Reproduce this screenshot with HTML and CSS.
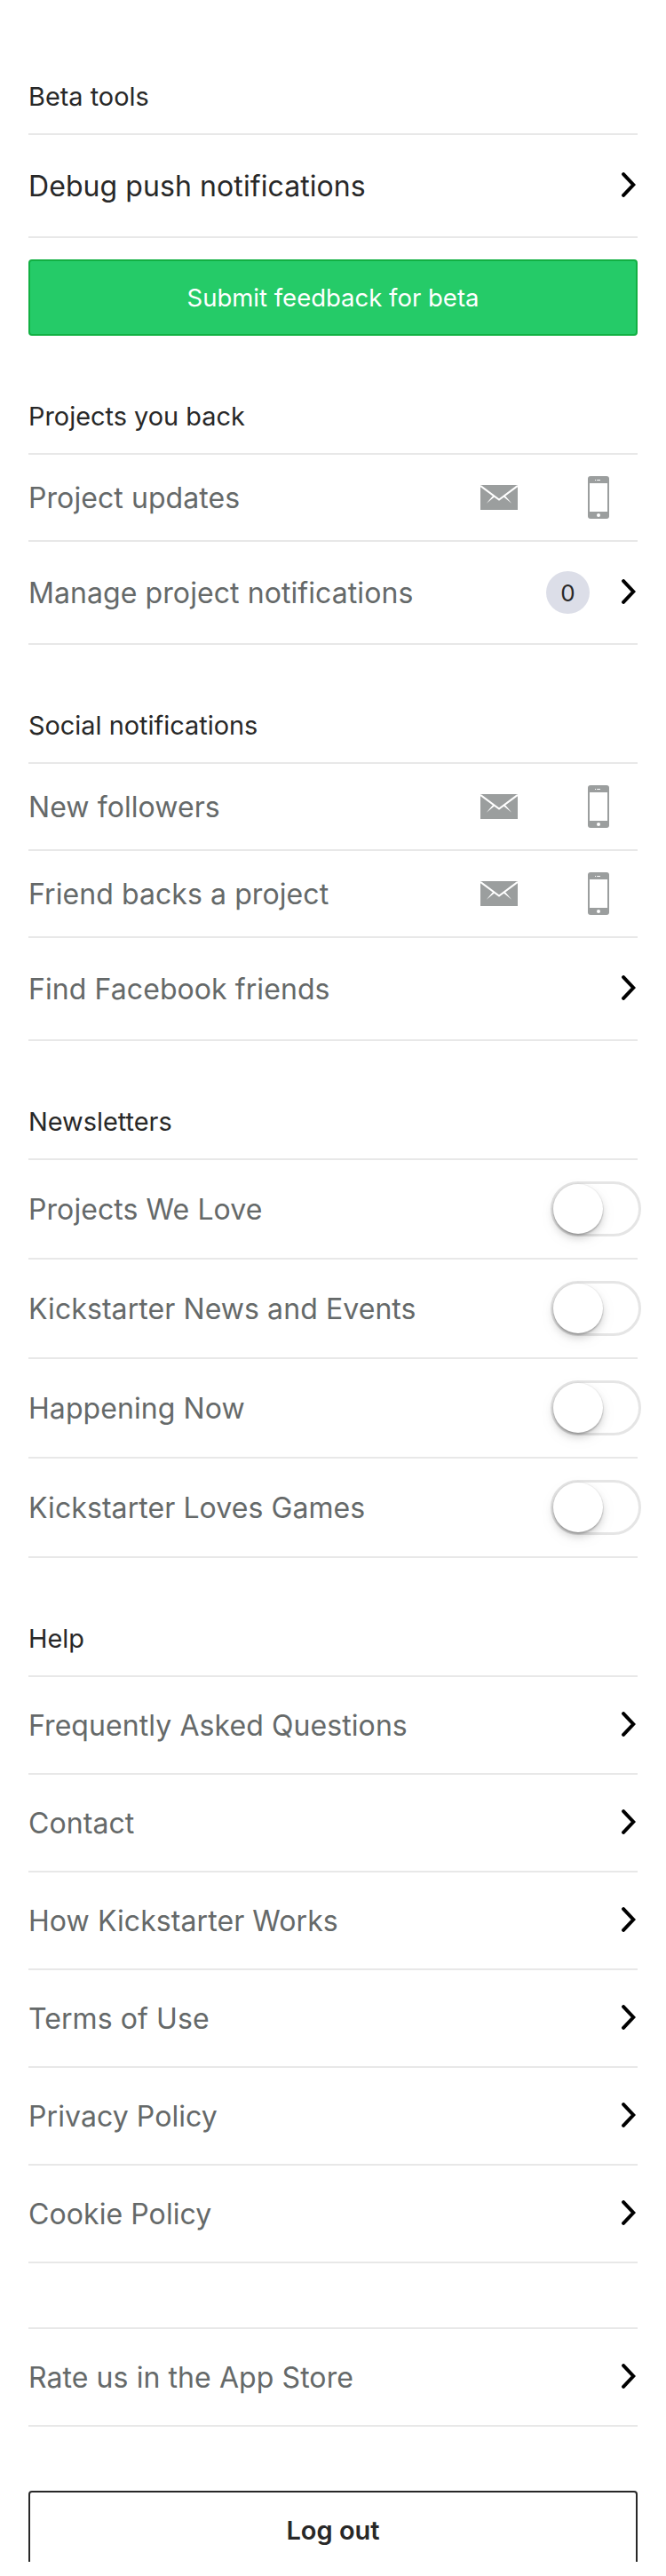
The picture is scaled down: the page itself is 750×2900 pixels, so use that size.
FILE: index.html
```html
<!DOCTYPE html>
<html lang="en">
<head>
<meta charset="utf-8">
<title>Settings</title>
<link rel="stylesheet" href="styles.css">
</head>
<body>
<svg class="sprite" aria-hidden="true">
  <symbol id="chevron" viewBox="0 0 16 28">
    <path d="M2.1 2.1 13.3 14 2.1 25.9" fill="none" stroke="#000" stroke-width="4" stroke-linecap="round"/>
  </symbol>
  <symbol id="mail" viewBox="0 0 42 28">
    <path d="M0 0h42v28H0z" fill="#9b9e9e"/>
    <path d="M0 .9 21 16.5 42 .9" fill="none" stroke="#fff" stroke-width="2"/>
    <path d="M14.6 11.6 6.8 20.8 16.4 13zM27.4 11.6l7.8 9.2L25.6 13z" fill="#fff"/>
  </symbol>
  <symbol id="phone" viewBox="0 0 24 48">
    <rect width="24" height="48" rx="3" fill="#9b9e9e"/>
    <path d="M2 8h20v32H2z" fill="#fff"/>
    <circle cx="12" cy="44" r="2" fill="#fff"/>
    <path d="M8 4.5h1M10.2 4.5h3.8" stroke="#fff" stroke-width="1"/>
  </symbol>
</svg>
<main class="settings">
  <section class="section">
    <h2 class="heading">Beta tools</h2>
    <a class="row row-tall row-dark"><span class="label">Debug push notifications</span><svg class="chevron"><use href="#chevron"/></svg></a>
    <button class="button button-primary">Submit feedback for beta</button>
  </section>

  <section class="section">
    <h2 class="heading">Projects you back</h2>
    <div class="row row-channels"><span class="label">Project updates</span><svg class="mail"><use href="#mail"/></svg><svg class="phone"><use href="#phone"/></svg></div>
    <a class="row row-tall"><span class="label">Manage project notifications</span><span class="badge">0</span><svg class="chevron"><use href="#chevron"/></svg></a>
  </section>

  <section class="section">
    <h2 class="heading">Social notifications</h2>
    <div class="row row-channels"><span class="label">New followers</span><svg class="mail"><use href="#mail"/></svg><svg class="phone"><use href="#phone"/></svg></div>
    <div class="row row-channels"><span class="label">Friend backs a project</span><svg class="mail"><use href="#mail"/></svg><svg class="phone"><use href="#phone"/></svg></div>
    <a class="row row-tall"><span class="label">Find Facebook friends</span><svg class="chevron"><use href="#chevron"/></svg></a>
  </section>

  <section class="section">
    <h2 class="heading">Newsletters</h2>
    <div class="row row-switch"><span class="label">Projects We Love</span><span class="switch"><span class="thumb"></span></span></div>
    <div class="row row-switch"><span class="label">Kickstarter News and Events</span><span class="switch"><span class="thumb"></span></span></div>
    <div class="row row-switch"><span class="label">Happening Now</span><span class="switch"><span class="thumb"></span></span></div>
    <div class="row row-switch"><span class="label">Kickstarter Loves Games</span><span class="switch"><span class="thumb"></span></span></div>
  </section>

  <section class="section">
    <h2 class="heading">Help</h2>
    <a class="row"><span class="label">Frequently Asked Questions</span><svg class="chevron"><use href="#chevron"/></svg></a>
    <a class="row"><span class="label">Contact</span><svg class="chevron"><use href="#chevron"/></svg></a>
    <a class="row"><span class="label">How Kickstarter Works</span><svg class="chevron"><use href="#chevron"/></svg></a>
    <a class="row"><span class="label">Terms of Use</span><svg class="chevron"><use href="#chevron"/></svg></a>
    <a class="row"><span class="label">Privacy Policy</span><svg class="chevron"><use href="#chevron"/></svg></a>
    <a class="row"><span class="label">Cookie Policy</span><svg class="chevron"><use href="#chevron"/></svg></a>
  </section>

  <section class="section section-rate">
    <a class="row"><span class="label">Rate us in the App Store</span><svg class="chevron"><use href="#chevron"/></svg></a>
  </section>

  <button class="button button-outline">Log out</button>
</main>
</body>
</html>
```
FILE: styles.css
```css
* { box-sizing: border-box; }

body {
  margin: 0;
  background: #fff;
  color: #282828;
  font-family: Inter, "Liberation Sans", sans-serif;
}

.sprite { position: absolute; width: 0; height: 0; }

.settings {
  height: 2884px;
  overflow: hidden;
  padding: 68px 32px 0;
}

.section { margin-bottom: 50px; }

.heading {
  display: flex;
  align-items: center;
  height: 84px;
  margin: 0;
  padding-bottom: 1px;
  border-bottom: 2px solid #e8e8e8;
  font-size: 28.9px;
  font-weight: 400;
}

.row {
  display: flex;
  align-items: center;
  height: 110px;
  border-bottom: 2px solid #e8e8e8;
  color: #656969;
  font-size: 32px;
  letter-spacing: 0.08px;
}

.row-tall { height: 116px; }
.row-dark { color: #282828; }
.row-channels { height: 98px; padding-right: 32px; }
.row-switch { height: 112px; }

.label { flex: 1; white-space: nowrap; }

.chevron {
  width: 16px;
  height: 28px;
  margin: 0 2px 2px 0;
}

.mail { width: 42px; height: 28px; margin-right: 79px; }
.phone { width: 24px; height: 48px; }

.badge {
  display: flex;
  align-items: center;
  justify-content: center;
  width: 49px;
  height: 48px;
  margin-right: 36px;
  border-radius: 50%;
  background: #dcdee8;
  color: #282828;
  font-size: 26px;
}

.switch {
  width: 102px;
  height: 62px;
  margin-right: -4px;
  border: 3px solid #e5e5e5;
  border-radius: 31px;
}

.thumb {
  display: block;
  width: 56px;
  height: 56px;
  border-radius: 50%;
  background: #fff;
  box-shadow: 0 0 0 1px rgba(0, 0, 0, 0.04), 0 2px 2px rgba(0, 0, 0, 0.2), 0 5px 8px rgba(0, 0, 0, 0.15), 0 6px 20px rgba(0, 0, 0, 0.05);
}

.button {
  display: flex;
  align-items: center;
  justify-content: center;
  width: 100%;
  border-radius: 4px;
  font-family: inherit;
}

.button-primary {
  height: 86px;
  margin-top: 24px;
  border: 2px solid #12b043;
  background: #25cb68;
  color: #fff;
  font-size: 27.5px;
}

.section-rate {
  margin-top: 72px;
  margin-bottom: 72px;
  border-top: 2px solid #e8e8e8;
}

.button-outline {
  height: 88px;
  border: 2px solid #282828;
  background: #fff;
  color: #282828;
  font-size: 29px;
  font-weight: 600;
}
```
